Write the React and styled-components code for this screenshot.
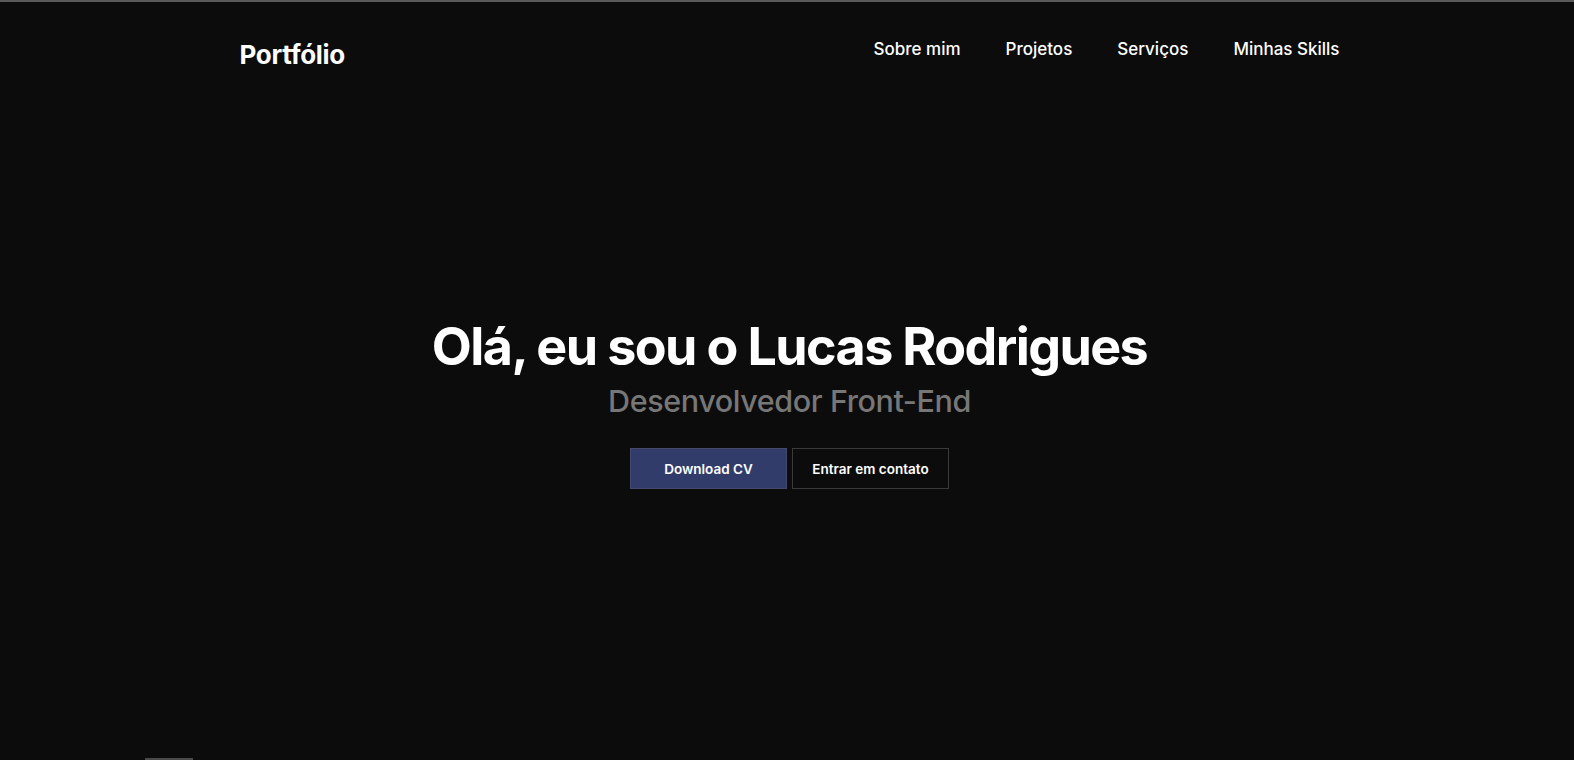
import React from 'react';
import styled, { createGlobalStyle } from 'styled-components';

const GlobalStyle = createGlobalStyle`
  * { box-sizing: border-box; margin: 0; padding: 0; }
  html, body { background: #0c0c0c; }
  body {
    font-family: "Inter", "Noto Sans", sans-serif;
    color: #ffffff;
    overflow: hidden;
  }
`;

const Page = styled.div`
  position: relative;
  height: 760px;
  padding-left: 5px;
  border-top: 2px solid #5a5a5a;
  display: flex;
  flex-direction: column;
`;

const Header = styled.header`
  width: 1100px;
  margin: 0 auto;
  display: flex;
  justify-content: space-between;
  align-items: flex-start;
  padding-top: 37px;
`;

const Logo = styled.h1`
  font-size: 26px;
  font-weight: 700;
  letter-spacing: -0.3px;
  line-height: 32px;
`;

const Nav = styled.nav`
  display: flex;
  gap: 45px;
  margin-top: -1px;
  a {
    color: #fff;
    text-decoration: none;
    font-size: 17px;
    font-weight: 500;
    line-height: 22px;
  }
`;

const Hero = styled.section`
  flex: 1;
  display: flex;
  flex-direction: column;
  align-items: center;
  padding-top: 246px;
`;

const Title = styled.h2`
  font-size: 52px;
  font-weight: 700;
  letter-spacing: -1.6px;
  line-height: 60px;
`;

const Subtitle = styled.p`
  color: #777777;
  font-size: 30.5px;
  font-weight: 500;
  letter-spacing: -0.4px;
  line-height: 38px;
  margin-top: 5px;
`;

const Buttons = styled.div`
  display: flex;
  gap: 5px;
  margin-top: 28px;
`;

const Button = styled.button`
  width: 157px;
  height: 41px;
  font-family: inherit;
  font-size: 13.5px;
  font-weight: 600;
  color: #fff;
  background: ${p => (p.$primary ? '#323c6b' : 'transparent')};
  border: 1px solid ${p => (p.$primary ? '#45486a' : '#3a3a3a')};
  cursor: pointer;
`;

const ScrollThumb = styled.div`
  position: absolute;
  left: 145px;
  bottom: 0;
  width: 48px;
  height: 2px;
  background: #4a4a4a;
`;

export default function App() {
  return (
    <Page>
      <GlobalStyle />
      <Header>
        <Logo>Portfólio</Logo>
        <Nav>
          <a href="#sobre">Sobre mim</a>
          <a href="#projetos">Projetos</a>
          <a href="#servicos">Serviços</a>
          <a href="#skills">Minhas Skills</a>
        </Nav>
      </Header>
      <Hero>
        <Title>Olá, eu sou o Lucas Rodrigues</Title>
        <Subtitle>Desenvolvedor Front-End</Subtitle>
        <Buttons>
          <Button $primary>Download CV</Button>
          <Button>Entrar em contato</Button>
        </Buttons>
      </Hero>
      <ScrollThumb />
    </Page>
  );
}
